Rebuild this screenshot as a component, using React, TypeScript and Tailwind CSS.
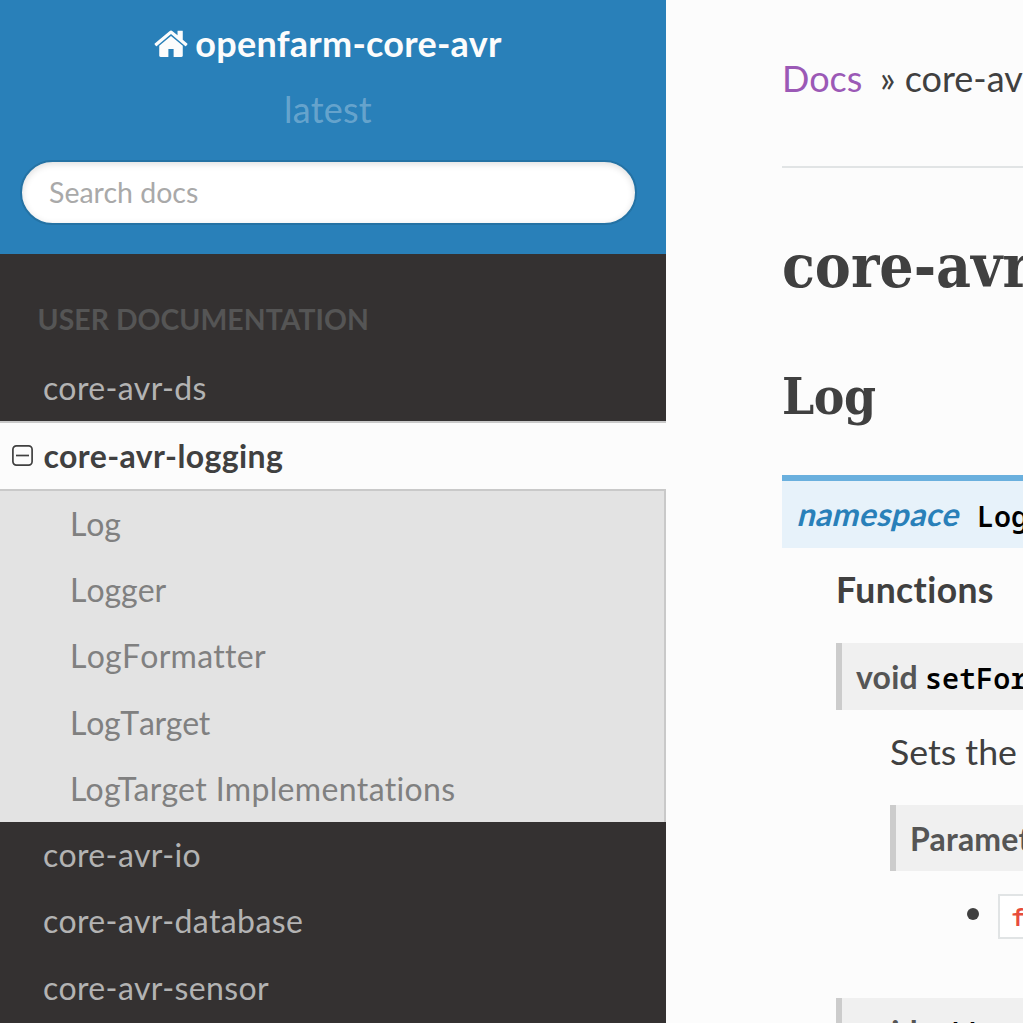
import React from "react";

const subItems = [
  { label: "Log", tracking: "tracking-[-0.2px]" },
  { label: "Logger", tracking: "tracking-[-0.05px]" },
  { label: "LogFormatter", tracking: "tracking-[0.25px]" },
  { label: "LogTarget", tracking: "tracking-[-0.3px]" },
  { label: "LogTarget Implementations", tracking: "tracking-[0.36px] [font-kerning:normal]" },
];
const lowerItems = ["core-avr-io", "core-avr-database", "core-avr-sensor"];

function HomeIcon() {
  return (
    <svg className="mr-[7px] mt-[21px] h-[27px] w-[34px] shrink-0" viewBox="0 0 1664 1312" preserveAspectRatio="none" fill="currentColor">
      <path d="M1408 768v480q0 26-19 45t-45 19H960V928H704v384H320q-26 0-45-19t-19-45V768q0-1 .5-3t.5-3l575-474 575 474q1 2 1 6zm223-69l-62 74q-8 9-21 11h-3q-13 0-21-7L832 200 140 777q-12 8-24 7-13-2-21-11l-62-74q-8-10-7-23.500t11-21.500L756 55q32-26 76-26t76 26l244 204V64q0-14 9-23t23-9h192q14 0 23 9t9 23v408l219 182q10 8 11 21.500t-7 23.500z" />
    </svg>
  );
}

function Sidebar() {
  return (
    <nav className="flex h-full w-[666px] shrink-0 flex-col overflow-hidden bg-[#343131]">
      <div className="flex h-[254px] shrink-0 flex-col bg-[#2980b9] pr-[10px] text-[#fcfcfc]">
        <a className="mt-[9px] flex h-[69px] justify-center text-[36px] leading-[68px] font-bold tracking-[0.25px]">
          <HomeIcon />
          <span>openfarm-core-avr</span>
        </a>
        <div className="h-[64px] text-center text-[36px] leading-[62px] tracking-[0.25px] text-white/30">latest</div>
        <input
          className="mt-[18px] ml-[20px] h-[65px] w-[617px] shrink-0 rounded-full border-2 border-[#2472a4] bg-white px-[27px] pb-[2px] text-[28.500px] text-[#404040] shadow-[inset_0_2px_7px_#ddd] outline-none placeholder:text-[#a9a9a9]"
          placeholder="Search docs"
        />
      </div>
      <p className="mt-[30px] h-[71px] shrink-0 pl-[37.500px] text-[28.400px] leading-[71px] font-bold tracking-[0.05px] text-[#555]">USER DOCUMENTATION</p>
      <a className="h-[66px] shrink-0 pl-[43px] text-[32px] leading-[66px] tracking-[0.38px] text-[#b3b3b3]">core-avr-ds</a>
      <a className="flex h-[70px] shrink-0 items-center border-y-2 border-[#c9c9c9] bg-[#fcfcfc] pl-[12px] text-[32px] leading-[66px] font-bold tracking-[0.4px] text-[#404040]">
        <svg className="mr-[10.500px] mb-[2px] h-[21px] w-[21px] shrink-0" viewBox="0 0 21 21" fill="none" stroke="#404040" strokeWidth="1.700">
          <rect x=".9" y=".9" width="19.200" height="19.200" rx="3.500" />
          <path d="M4 10.500h13" />
        </svg>
        core-avr-logging
      </a>
      <ul className="h-[331px] shrink-0 border-r-2 border-[#c9c9c9] bg-[#e3e3e3] [font-kerning:none]">
        {subItems.map((item) => (
          <li key={item.label} className={`h-[66.200px] pl-[70px] text-[32px] leading-[66.600px] text-[#808080] ${item.tracking}`}>{item.label}</li>
        ))}
      </ul>
      {lowerItems.map((t) => (
        <a key={t} className="h-[66.300px] shrink-0 pl-[43px] text-[32px] leading-[66.300px] tracking-[0.4px] text-[#b3b3b3]">{t}</a>
      ))}
    </nav>
  );
}

const mono = "font-['Consolas','Noto_Sans_Mono','DejaVu_Sans_Mono',monospace]";

export default function App() {
  return (
    <div className="flex h-[1023px] w-[1023px] overflow-hidden bg-[#fcfcfc] font-['Lato',sans-serif] text-[#404040] [font-variant-ligatures:none]">
      <Sidebar />
      <main className="min-w-0 flex-1 overflow-hidden pl-[116px] whitespace-nowrap">
        <div className="flex h-[168px] border-b-2 border-[#e1e4e5] pt-[52px] text-[36px] leading-[53px]">
          <a className="w-[98px] shrink-0 text-[#9b59b6]">Docs</a>
          <span>» core-avr-logging</span>
        </div>
        <h1 className="mt-[55px] h-[87px] font-['DejaVu_Serif_Condensed','DejaVu_Serif',serif] text-[60px] leading-[86px] font-bold [font-stretch:condensed]">core-avr-logging</h1>
        <h2 className="mt-[50px] h-[73px] font-['DejaVu_Serif_Condensed','DejaVu_Serif',serif] text-[51px] leading-[72px] font-bold tracking-[-0.5px] [font-stretch:condensed]">Log</h2>
        <div className="mt-[42px] flex h-[73px] border-t-[6px] border-[#6ab0de] bg-[#e7f2fa] pl-[17px] leading-[66px]">
          <em className="w-[178px] shrink-0 -skew-x-[14deg] text-[32px] font-bold tracking-[0.35px] not-italic text-[#2980b9]">namespace</em>
          <code className={`text-[28.400px] leading-[70px] font-semibold text-black ${mono}`}>Log</code>
        </div>
        <div className="pl-[54px]">
          <p className="mt-[15px] h-[54px] text-[35.500px] leading-[54px] font-bold tracking-[0.4px]">Functions</p>
          <div className="mt-[26px] flex h-[67px] border-l-[6px] border-[#ccc] bg-[#f0f0f0] pl-[14px] leading-[68px]">
            <span className="w-[69px] shrink-0 text-[32px] font-bold tracking-[0.2px] text-[#555]">void</span>
            <code className={`text-[28.400px] leading-[71px] font-semibold text-black ${mono}`}>setFormatter</code>
          </div>
          <div className="pl-[54px]">
            <p className="mt-[15px] h-[54px] text-[35.700px] leading-[53px]">Sets the formatter</p>
            <div className="mt-[26px] h-[66px] border-l-[6px] border-[#ccc] bg-[#f0f0f0] pl-[14px] text-[32px] leading-[68px] font-bold tracking-[0.2px] text-[#555]">Parameters</div>
            <div className="mt-[23px] flex h-[45px] pl-[77px]">
              <span className="mt-[14px] mr-[19px] h-[12px] w-[12px] shrink-0 rounded-full bg-[#404040]" />
              <code className={`border-2 border-[#e1e4e5] bg-white px-[11px] text-[24px] leading-[41px] font-semibold text-[#e74c3c] ${mono}`}>formatter</code>
            </div>
          </div>
          <div className="mt-[59px] flex h-[67px] border-l-[6px] border-[#ccc] bg-[#f0f0f0] pl-[14px] leading-[68px]">
            <span className="w-[69px] shrink-0 text-[32px] font-bold tracking-[0.2px] text-[#555]">void</span>
            <code className={`text-[28.400px] leading-[71px] font-semibold text-black ${mono}`}>addTarget</code>
          </div>
        </div>
      </main>
    </div>
  );
}
